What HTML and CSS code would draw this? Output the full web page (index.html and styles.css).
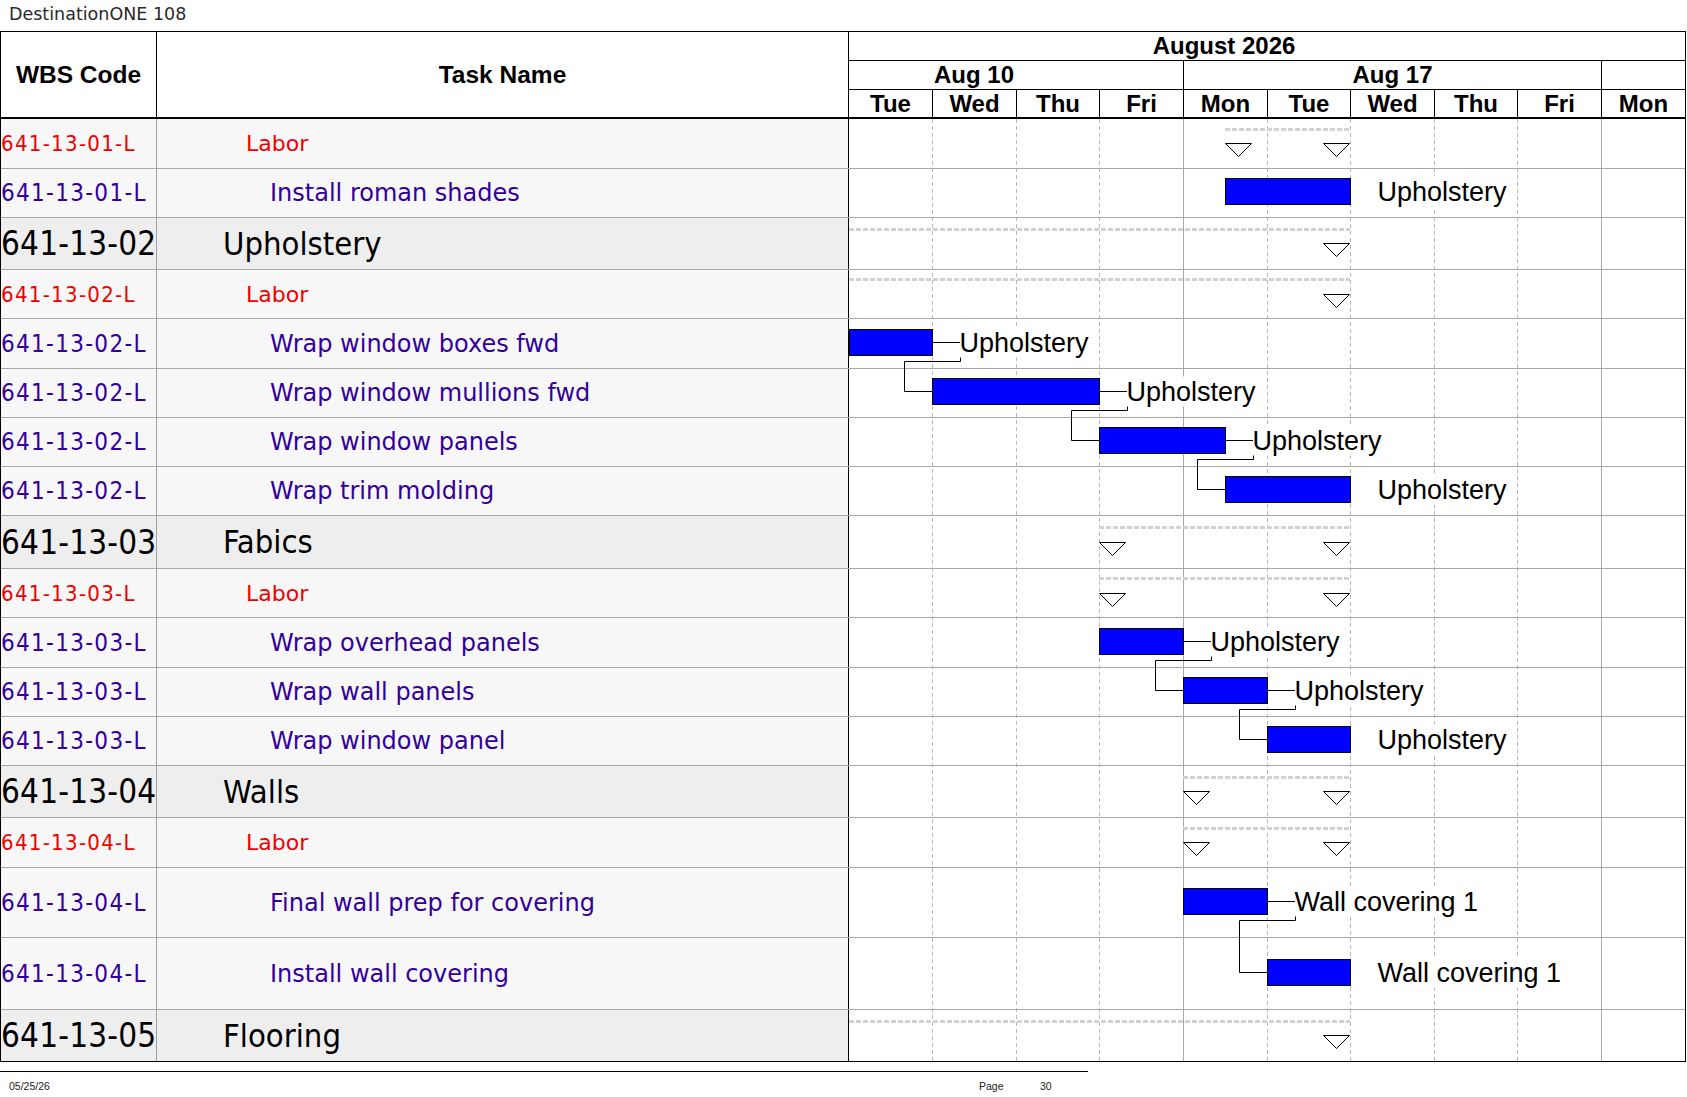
FILE: index.html
```html
<!DOCTYPE html>
<html lang="en">
<head>
<meta charset="utf-8">
<title>DestinationONE 108</title>
<link rel="stylesheet" href="styles.css">
</head>
<body>
<div class="page">
  <div class="title">DestinationONE 108</div>
  <div class="sheet">
    <div class="head">
      <div class="hcell h-wbs">WBS Code</div>
      <div class="hcell h-name">Task Name</div>
      <div class="timescale">
        <div class="tier tier-month">August 2026</div>
        <div class="tier tier-week">
          <div class="week wk1">Aug 10</div>
          <div class="week wk2">Aug 17</div>
          <div class="week wk3"></div>
        </div>
        <div class="tier tier-day">
          <div class="day">Tue</div>
          <div class="day">Wed</div>
          <div class="day">Thu</div>
          <div class="day">Fri</div>
          <div class="day">Mon</div>
          <div class="day">Tue</div>
          <div class="day">Wed</div>
          <div class="day">Thu</div>
          <div class="day">Fri</div>
          <div class="day">Mon</div>
        </div>
      </div>
    </div>
    <div class="body">
      <div class="table">
        <div class="row labor h50"><div class="code">641-13-01-L</div><div class="name">Labor</div></div>
        <div class="row task h49"><div class="code">641-13-01-L</div><div class="name">Install roman shades</div></div>
        <div class="row summary h52"><div class="code">641-13-02</div><div class="name">Upholstery</div></div>
        <div class="row labor h49"><div class="code">641-13-02-L</div><div class="name">Labor</div></div>
        <div class="row task h50"><div class="code">641-13-02-L</div><div class="name">Wrap window boxes fwd</div></div>
        <div class="row task h49"><div class="code">641-13-02-L</div><div class="name">Wrap window mullions fwd</div></div>
        <div class="row task h49"><div class="code">641-13-02-L</div><div class="name">Wrap window panels</div></div>
        <div class="row task h49"><div class="code">641-13-02-L</div><div class="name">Wrap trim molding</div></div>
        <div class="row summary h53"><div class="code">641-13-03</div><div class="name">Fabics</div></div>
        <div class="row labor h49"><div class="code">641-13-03-L</div><div class="name">Labor</div></div>
        <div class="row task h50"><div class="code">641-13-03-L</div><div class="name">Wrap overhead panels</div></div>
        <div class="row task h49"><div class="code">641-13-03-L</div><div class="name">Wrap wall panels</div></div>
        <div class="row task h49"><div class="code">641-13-03-L</div><div class="name">Wrap window panel</div></div>
        <div class="row summary h52"><div class="code">641-13-04</div><div class="name">Walls</div></div>
        <div class="row labor h50"><div class="code">641-13-04-L</div><div class="name">Labor</div></div>
        <div class="row task h70"><div class="code">641-13-04-L</div><div class="name">Final wall prep for covering</div></div>
        <div class="row task h72"><div class="code">641-13-04-L</div><div class="name">Install wall covering</div></div>
        <div class="row summary h52 last"><div class="code">641-13-05</div><div class="name">Flooring</div></div>
      </div>
      <svg class="chart" width="836" height="943" viewBox="0 0 836 943" xmlns="http://www.w3.org/2000/svg">
        <g class="grid-dash">
          <line x1="83.5" y1="0" x2="83.5" y2="943"/>
          <line x1="167.5" y1="0" x2="167.5" y2="943"/>
          <line x1="250.5" y1="0" x2="250.5" y2="943"/>
          <line x1="418.5" y1="0" x2="418.5" y2="943"/>
          <line x1="501.5" y1="0" x2="501.5" y2="943"/>
          <line x1="585.5" y1="0" x2="585.5" y2="943"/>
          <line x1="668.5" y1="0" x2="668.5" y2="943"/>
        </g>
        <g class="grid-solid">
          <line x1="334.5" y1="0" x2="334.5" y2="943"/>
          <line x1="752.5" y1="0" x2="752.5" y2="943"/>
          <line x1="0" y1="49.5" x2="836" y2="49.5"/>
          <line x1="0" y1="98.5" x2="836" y2="98.5"/>
          <line x1="0" y1="150.5" x2="836" y2="150.5"/>
          <line x1="0" y1="199.5" x2="836" y2="199.5"/>
          <line x1="0" y1="249.5" x2="836" y2="249.5"/>
          <line x1="0" y1="298.5" x2="836" y2="298.5"/>
          <line x1="0" y1="347.5" x2="836" y2="347.5"/>
          <line x1="0" y1="396.5" x2="836" y2="396.5"/>
          <line x1="0" y1="449.5" x2="836" y2="449.5"/>
          <line x1="0" y1="498.5" x2="836" y2="498.5"/>
          <line x1="0" y1="548.5" x2="836" y2="548.5"/>
          <line x1="0" y1="597.5" x2="836" y2="597.5"/>
          <line x1="0" y1="646.5" x2="836" y2="646.5"/>
          <line x1="0" y1="698.5" x2="836" y2="698.5"/>
          <line x1="0" y1="748.5" x2="836" y2="748.5"/>
          <line x1="0" y1="818.5" x2="836" y2="818.5"/>
          <line x1="0" y1="890.5" x2="836" y2="890.5"/>
        </g>
        <line class="grid-bottom" x1="0" y1="942.5" x2="836" y2="942.5"/>

        <g class="sum-line">
          <line x1="376" y1="10.5" x2="501" y2="10.5"/>
          <line x1="0" y1="110.5" x2="501" y2="110.5"/>
          <line x1="0" y1="160.5" x2="501" y2="160.5"/>
          <line x1="250" y1="408.5" x2="501" y2="408.5"/>
          <line x1="250" y1="459.5" x2="501" y2="459.5"/>
          <line x1="334" y1="658.5" x2="501" y2="658.5"/>
          <line x1="334" y1="709.5" x2="501" y2="709.5"/>
          <line x1="0" y1="902.5" x2="501" y2="902.5"/>
        </g>

        <g class="tri">
          <polygon points="376.5,24.5 402.5,24.5 389.5,37.5"/>
          <polygon points="474.5,24.5 500.5,24.5 487.5,37.5"/>
          <polygon points="474.5,124.5 500.5,124.5 487.5,137.5"/>
          <polygon points="474.5,175.5 500.5,175.5 487.5,188.5"/>
          <polygon points="250.5,423.5 276.5,423.5 263.5,436.5"/>
          <polygon points="474.5,423.5 500.5,423.5 487.5,436.5"/>
          <polygon points="250.5,474.5 276.5,474.5 263.5,487.5"/>
          <polygon points="474.5,474.5 500.5,474.5 487.5,487.5"/>
          <polygon points="334.5,672.5 360.5,672.5 347.5,685.5"/>
          <polygon points="474.5,672.5 500.5,672.5 487.5,685.5"/>
          <polygon points="334.5,723.5 360.5,723.5 347.5,736.5"/>
          <polygon points="474.5,723.5 500.5,723.5 487.5,736.5"/>
          <polygon points="474.5,916.5 500.5,916.5 487.5,929.5"/>
        </g>

        <g class="link">
          <path d="M83 223.5 H111.5 V242.5 H55.5 V272.5 H83"/>
          <path d="M250 272.5 H278.5 V291.5 H222.5 V321.5 H250"/>
          <path d="M376 321.5 H404.5 V340.5 H348.5 V370.5 H376"/>
          <path d="M334 522.5 H362.5 V541.5 H306.5 V571.5 H334"/>
          <path d="M418 571.5 H446.5 V590.5 H390.5 V620.5 H418"/>
          <path d="M418 782.5 H446.5 V801.5 H390.5 V853.5 H418"/>
        </g>

        <g class="label-bg">
          <rect x="529" y="57.5" width="132" height="30"/>
          <rect x="111" y="208.5" width="132" height="30"/>
          <rect x="278" y="257.5" width="132" height="30"/>
          <rect x="404" y="306.5" width="132" height="30"/>
          <rect x="529" y="355.5" width="132" height="30"/>
          <rect x="362" y="507.5" width="132" height="30"/>
          <rect x="446" y="556.5" width="132" height="30"/>
          <rect x="529" y="605.5" width="132" height="30"/>
          <rect x="446" y="767.5" width="188" height="30"/>
          <rect x="529" y="838.5" width="188" height="30"/>
        </g>
        <g class="label">
          <text x="528.5" y="82">Upholstery</text>
          <text x="110.5" y="233">Upholstery</text>
          <text x="277.5" y="282">Upholstery</text>
          <text x="403.5" y="331">Upholstery</text>
          <text x="528.5" y="380">Upholstery</text>
          <text x="361.5" y="532">Upholstery</text>
          <text x="445.5" y="581">Upholstery</text>
          <text x="528.5" y="630">Upholstery</text>
          <text x="445.5" y="792">Wall covering 1</text>
          <text x="528.5" y="863">Wall covering 1</text>
        </g>

        <g class="bar">
          <rect x="376.5" y="59.5" width="125" height="26"/>
          <rect x="0.5" y="210.5" width="83" height="26"/>
          <rect x="83.5" y="259.5" width="167" height="26"/>
          <rect x="250.5" y="308.5" width="126" height="26"/>
          <rect x="376.5" y="357.5" width="125" height="26"/>
          <rect x="250.5" y="509.5" width="84" height="26"/>
          <rect x="334.5" y="558.5" width="84" height="26"/>
          <rect x="418.5" y="607.5" width="83" height="26"/>
          <rect x="334.5" y="769.5" width="84" height="26"/>
          <rect x="418.5" y="840.5" width="83" height="26"/>
        </g>
      </svg>
    </div>
  </div>
  <div class="footer">
    <span class="foot-date">05/25/26</span>
    <span class="foot-page">Page</span>
    <span class="foot-num">30</span>
  </div>
</div>
</body>
</html>
```

FILE: styles.css
```css
html, body {
  margin: 0;
  padding: 0;
  background: #ffffff;
}

body {
  font-family: "Liberation Sans", Arial, sans-serif;
  color: #000;
}

.page {
  width: 1687px;
}

.title {
  box-sizing: border-box;
  height: 31px;
  padding-left: 9px;
  font-family: "DejaVu Sans", sans-serif;
  font-weight: normal;
  font-size: 17.5px;
  line-height: 29px;
  color: #2a2a2a;
  white-space: nowrap;
}

.sheet {
  box-sizing: border-box;
  width: 1686px;
  border-left: 1px solid #000;
  border-right: 1px solid #000;
}

/* ---------- header ---------- */
.head {
  box-sizing: border-box;
  display: flex;
  height: 88px;
  border-top: 1px solid #000;
  border-bottom: 2px solid #000;
}

.hcell {
  box-sizing: border-box;
  display: flex;
  align-items: center;
  justify-content: center;
  font-family: "Liberation Sans", Arial, sans-serif;
  font-weight: bold;
  font-size: 24.5px;
  border-right: 1px solid #000;
}

.h-wbs { width: 156px; }
.h-name { width: 692px; }

.timescale {
  width: 836px;
  display: flex;
  flex-direction: column;
}

.tier {
  box-sizing: border-box;
  font-family: "Liberation Sans", Arial, sans-serif;
  font-weight: bold;
  font-size: 24px;
  white-space: nowrap;
}

.tier-month {
  height: 29px;
  line-height: 28px;
  border-bottom: 1px solid #000;
  text-align: center;
  padding-right: 86px;
}

.tier-week {
  height: 29px;
  line-height: 28px;
  border-bottom: 1px solid #000;
  display: grid;
  grid-template-columns: 84px 84px 83px 84px 84px 83px 84px 83px 84px 83px;
}

.tier-day {
  height: 27px;
  line-height: 27px;
  display: grid;
  grid-template-columns: 84px 84px 83px 84px 84px 83px 84px 83px 84px 83px;
}

.week {
  box-sizing: border-box;
  text-align: center;
  border-right: 1px solid #000;
}

.wk1 { grid-column: 1 / 5; padding-right: 84px; }
.wk2 { grid-column: 5 / 10; }
.wk3 { grid-column: 10 / 11; border-right: none; }

.day {
  box-sizing: border-box;
  text-align: center;
  border-right: 1px solid #000;
}

.day:last-child { border-right: none; }

/* ---------- body ---------- */
.body {
  display: flex;
}

.table {
  width: 848px;
  display: flex;
  flex-direction: column;
}

.row {
  box-sizing: border-box;
  display: flex;
  border-bottom: 1px solid #a8a8a8;
  background: #f7f7f7;
}

.row.last { border-bottom-color: #000; }

.h49 { height: 49px; }
.h50 { height: 50px; }
.h52 { height: 52px; }
.h53 { height: 53px; }
.h70 { height: 70px; }
.h72 { height: 72px; }

.code {
  box-sizing: border-box;
  width: 156px;
  flex: none;
  display: flex;
  align-items: center;
  white-space: nowrap;
  border-right: 1px solid #a0a0a0;
  font-family: "DejaVu Sans Condensed", "DejaVu Sans", sans-serif;
  font-stretch: condensed;
}

.name {
  box-sizing: border-box;
  width: 692px;
  flex: none;
  display: flex;
  align-items: center;
  white-space: nowrap;
  border-right: 1px solid #000;
  font-family: "DejaVu Sans", Verdana, sans-serif;
}

.row.labor { color: #ee0000; }
.row.labor .code { font-size: 22px; letter-spacing: 1.3px; }
.row.labor .name { font-size: 22px; padding-left: 89px; }

.row.task { color: #330099; }
.row.task .code { font-size: 24px; letter-spacing: 1.3px; }
.row.task .name { font-size: 24px; padding-left: 113px; }

.row.summary { background: #eeeeee; color: #000; }
.row.summary .code { font-size: 33px; letter-spacing: 0.2px; }
.row.summary .name {
  font-size: 32.5px;
  padding-left: 66px;
  font-family: "DejaVu Sans Condensed", "DejaVu Sans", sans-serif;
  font-stretch: condensed;
}

/* ---------- chart ---------- */
.chart {
  display: block;
  width: 836px;
  height: 943px;
  background: #ffffff;
}

.grid-dash line {
  stroke: #b8b8b8;
  stroke-width: 1;
  stroke-dasharray: 4 3;
}

.grid-solid line {
  stroke: #a8a8a8;
  stroke-width: 1;
}

.grid-bottom {
  stroke: #000;
  stroke-width: 1;
}

.sum-line line {
  stroke: #d2d2d2;
  stroke-width: 3;
  stroke-dasharray: 5 2;
}

.tri polygon {
  fill: #ffffff;
  stroke: #000;
  stroke-width: 1;
}

.link path {
  fill: none;
  stroke: #000;
  stroke-width: 1;
}

.label-bg rect {
  fill: #ffffff;
}

.label text {
  font-family: "Liberation Sans", Arial, sans-serif;
  font-size: 27px;
  fill: #000;
}

.bar rect {
  fill: #0000ff;
  stroke: #000;
  stroke-width: 1;
}

/* ---------- footer ---------- */
.footer {
  box-sizing: border-box;
  width: 1088px;
  margin-top: 9px;
  border-top: 1px solid #000;
  display: flex;
  padding-top: 8px;
  padding-left: 9px;
  font-family: "Liberation Sans", Arial, sans-serif;
  font-size: 10.5px;
  line-height: 12px;
  color: #222;
}

.foot-date { width: 970px; }
.foot-page { width: 61px; }
```
